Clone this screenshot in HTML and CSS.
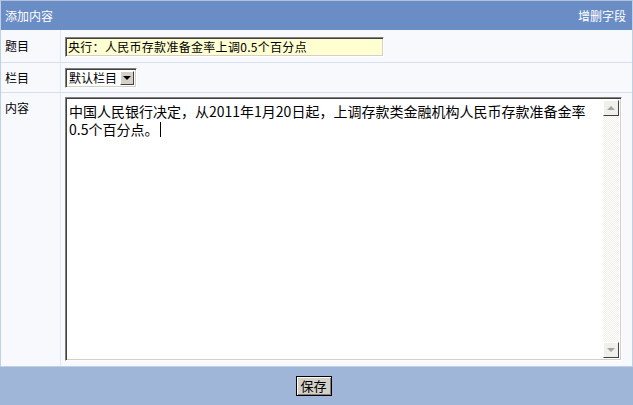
FILE: index.html
```html
<!DOCTYPE html>
<html lang="zh-CN">
<head>
    <meta charset="UTF-8">
    <title>添加内容</title>
    <link rel="stylesheet" href="styles.css">
</head>
<body>
    <div class="panel">
        <div class="panel-head">
            <span>添加内容</span>
            <a href="#" class="head-link">增删字段</a>
        </div>
        <div class="form-grid">
            <div class="label">题目</div>
            <div class="field">
                <input type="text" class="title-input" value="央行：人民币存款准备金率上调0.5个百分点">
            </div>

            <div class="label">栏目</div>
            <div class="field">
                <span class="select">
                    <span class="select-text">默认栏目</span>
                    <span class="select-btn"><span class="arrow-down"></span></span>
                </span>
            </div>

            <div class="label label-top">内容</div>
            <div class="field field-top">
                <div class="editor">
                    <div class="editor-text">中国人民银行决定，从2011年1月20日起，上调存款类金融机构人民币存款准备金率0.5个百分点。<span class="caret"></span></div>
                    <div class="scrollbar">
                        <span class="sb-btn"><span class="sb-arrow up"></span></span>
                        <span class="sb-track"></span>
                        <span class="sb-btn"><span class="sb-arrow down"></span></span>
                    </div>
                </div>
            </div>
        </div>
    </div>

    <div class="footer">
        <button class="save-btn">保存</button>
    </div>
</body>
</html>
```

FILE: styles.css
```css
body {
    margin: 0;
    background-color: #9fb6d9;
    font-family: "Noto Sans CJK SC", sans-serif;
    font-size: 12px;
    color: #000;
}

.panel {
    border: 1px solid #c0cfe8;
    border-top-color: #b4c2da;
    background-color: #f7f9fd;
}

.panel-head {
    display: flex;
    justify-content: space-between;
    align-items: center;
    height: 29px;
    padding: 0 6px 0 4px;
    background-color: #6b8dc5;
    color: #fff;
    line-height: 16px;
}

.head-link {
    color: #fff;
    text-decoration: none;
}

.form-grid {
    display: grid;
    grid-template-columns: 60px 1fr;
    grid-template-rows: 32px 30px 274px;
}

.label,
.field {
    display: flex;
    align-items: center;
    border-top: 1px solid #d6dff0;
    box-sizing: border-box;
}

.form-grid > .label:first-child,
.form-grid > .label:first-child + .field {
    border-top: none;
}

.label {
    padding-left: 4px;
    border-right: 1px solid #e1e7f3;
    line-height: 16px;
}

.field {
    padding-left: 4px;
    padding-right: 10px;
}

.label-top {
    align-items: flex-start;
    padding-top: 7px;
}

.field-top {
    align-items: flex-start;
    padding-top: 4px;
}

/* sunken win-classic edge */
.title-input,
.select,
.editor {
    box-sizing: border-box;
    border: 1px solid;
    border-color: #808080 #fff #fff #808080;
    box-shadow: inset 1px 1px #404040, inset -1px -1px #d4d0c8;
}

.title-input {
    width: 319px;
    height: 20px;
    padding: 0 2px;
    margin-top: 1px;
    background-color: #ffffd2;
    font-family: inherit;
    font-size: 12px;
    letter-spacing: 0.3px;
    color: #000;
    outline: none;
}

.select {
    display: inline-flex;
    align-items: center;
    width: 72px;
    height: 20px;
    padding: 2px;
    background-color: #fff;
}

.select-text {
    flex: 1;
    padding-left: 1px;
    line-height: 16px;
}

.select-btn {
    display: flex;
    align-items: center;
    justify-content: center;
    width: 14px;
    height: 14px;
    background-color: #d4d0c8;
    border: 1px solid;
    border-color: #fff #404040 #404040 #fff;
    box-sizing: border-box;
}

.arrow-down {
    border-left: 4px solid transparent;
    border-right: 4px solid transparent;
    border-top: 4px solid #000;
}

.editor {
    display: flex;
    width: 557px;
    height: 264px;
    padding: 2px;
    background-color: #fff;
}

.editor-text {
    flex: 1;
    padding: 2px 2px 2px 1px;
    font-size: 14px;
    line-height: 18px;
}

.caret {
    display: inline-block;
    width: 1px;
    height: 15px;
    margin-left: 2px;
    vertical-align: -2px;
    background-color: #000;
}

.scrollbar {
    display: flex;
    flex-direction: column;
    width: 16px;
}

.sb-btn {
    display: flex;
    align-items: center;
    justify-content: center;
    height: 16px;
    box-sizing: border-box;
    background-color: #f1efea;
    border: 1px solid;
    border-color: #fff #404040 #404040 #fff;
}

.sb-track {
    flex: 1;
    background: repeating-conic-gradient(#fff 0 25%, #f1efeb 0 50%) 0 0 / 2px 2px;
}

.sb-arrow {
    border-left: 4px solid transparent;
    border-right: 4px solid transparent;
}

.sb-arrow.up {
    border-bottom: 4px solid #a3a3a3;
}

.sb-arrow.down {
    border-top: 4px solid #a3a3a3;
}

.footer {
    display: flex;
    justify-content: center;
    padding-top: 9px;
}

.save-btn {
    width: 36px;
    height: 20px;
    padding: 0;
    margin-right: 6px;
    background-color: #d4d0c8;
    border: 1px solid #000;
    box-shadow: inset 1px 1px #fff, inset -1px -1px #808080;
    font-family: inherit;
    font-size: 13px;
    line-height: 16px;
    color: #000;
}
```
